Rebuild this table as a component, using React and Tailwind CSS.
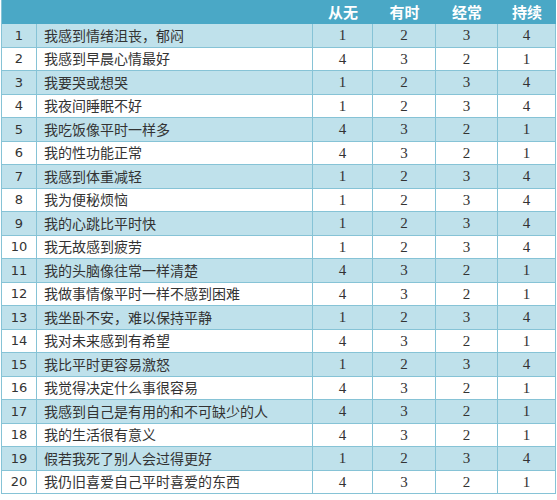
const rows = [
  ["我感到情绪沮丧，郁闷", 1],
  ["我感到早晨心情最好", 0],
  ["我要哭或想哭", 1],
  ["我夜间睡眠不好", 1],
  ["我吃饭像平时一样多", 0],
  ["我的性功能正常", 0],
  ["我感到体重减轻", 1],
  ["我为便秘烦恼", 1],
  ["我的心跳比平时快", 1],
  ["我无故感到疲劳", 1],
  ["我的头脑像往常一样清楚", 0],
  ["我做事情像平时一样不感到困难", 0],
  ["我坐卧不安，难以保持平静", 1],
  ["我对未来感到有希望", 0],
  ["我比平时更容易激怒", 1],
  ["我觉得决定什么事很容易", 0],
  ["我感到自己是有用的和不可缺少的人", 0],
  ["我的生活很有意义", 0],
  ["假若我死了别人会过得更好", 1],
  ["我仍旧喜爱自己平时喜爱的东西", 0],
];

const cols = "grid grid-cols-[35px_276px_60px_63px_62px_58px]";

export default function App() {
  return (
    <div className="w-[557px] h-[500px] bg-white pl-px text-[#333]">
      <div className="w-[555px] border-l border-[#86c3d6]">
        <div
          className={`${cols} h-[24px] bg-[#4aa8c6] text-white font-bold text-[15px] items-center`}
          style={{ fontFamily: '"Noto Sans CJK SC", sans-serif' }}
        >
          <div />
          <div />
          <div className="text-center">从无</div>
          <div className="text-center">有时</div>
          <div className="text-center">经常</div>
          <div className="text-center">持续</div>
        </div>
        {rows.map(([text, asc], i) => {
          const scores = asc ? [1, 2, 3, 4] : [4, 3, 2, 1];
          return (
            <div
              key={i}
              className={`${cols} h-[23.5px] border-b border-[#86c3d6] ${i % 2 === 0 ? "bg-[#bfe1eb]" : "bg-white"}`}
            >
              <div
                className="flex items-center justify-center border-r border-[#86c3d6] text-[13px]"
                style={{ fontFamily: '"DejaVu Sans", sans-serif' }}
              >
                {i + 1}
              </div>
              <div
                className="flex items-center pl-[7px] border-r border-[#86c3d6] text-[14px]"
                style={{ fontFamily: '"Noto Sans CJK SC", sans-serif' }}
              >
                {text}
              </div>
              {scores.map((s, j) => (
                <div
                  key={j}
                  className="flex items-center justify-center border-r border-[#86c3d6] text-[15px]"
                  style={{ fontFamily: '"Liberation Serif", serif' }}
                >
                  {s}
                </div>
              ))}
            </div>
          );
        })}
      </div>
    </div>
  );
}
